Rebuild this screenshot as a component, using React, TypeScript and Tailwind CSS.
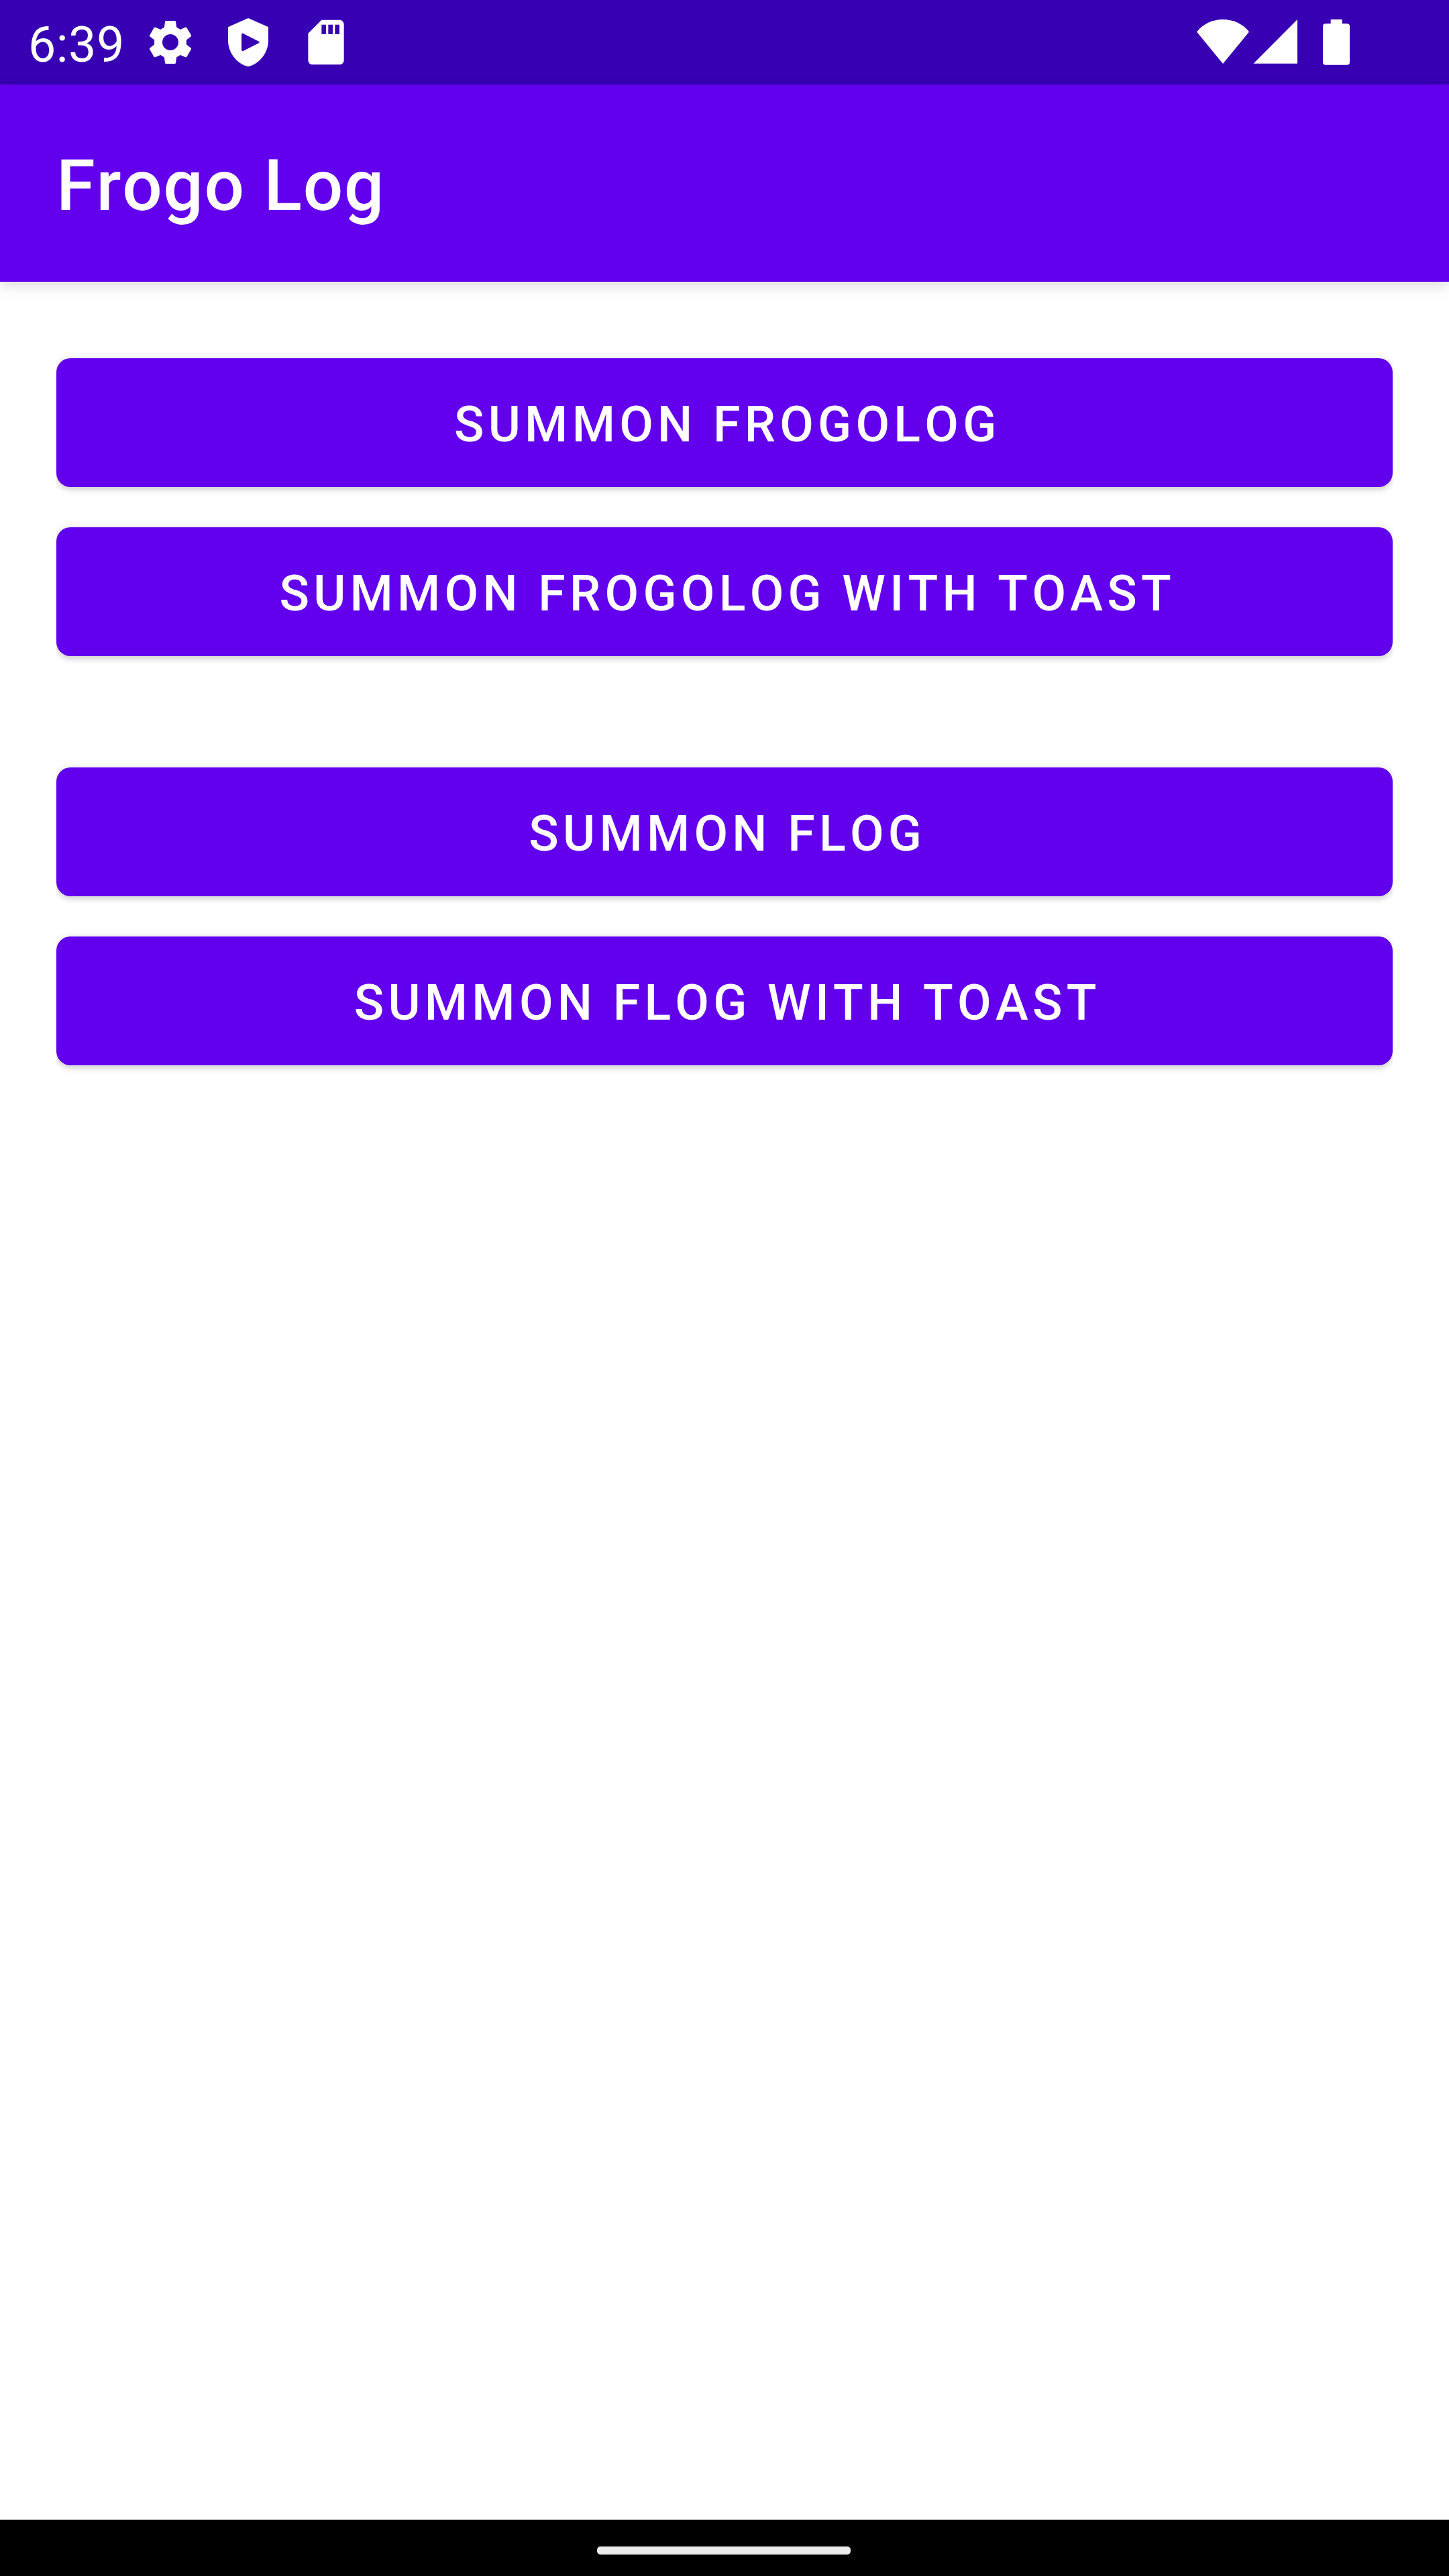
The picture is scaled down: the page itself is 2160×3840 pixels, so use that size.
import React from "react";

function StatusBar() {
  return (
    <div className="flex h-[126px] shrink-0 items-center justify-between bg-[#3700b3] pr-[148px] pl-[42px] text-white">
      <div className="flex items-center">
        <span className="w-[172px] pt-[8px] text-[73.5px] leading-[90px] tracking-[0.5px] whitespace-nowrap">6:39</span>
        <svg className="size-[80px]" viewBox="0 0 24 24" fill="currentColor">
          <path d="M19.14 12.94c.04-.3.06-.61.06-.94 0-.32-.02-.64-.07-.94l2.03-1.58c.18-.14.23-.41.12-.61l-1.92-3.32c-.12-.22-.37-.29-.59-.22l-2.39.96c-.5-.38-1.03-.7-1.62-.94l-.36-2.54c-.04-.24-.24-.41-.48-.41h-3.84c-.24 0-.43.17-.47.41l-.36 2.54c-.59.24-1.13.57-1.62.94l-2.39-.96c-.22-.08-.47 0-.59.22L2.74 8.87c-.12.21-.08.47.12.61l2.03 1.58c-.05.3-.09.63-.09.94s.02.64.07.94l-2.03 1.58c-.18.14-.23.41-.12.61l1.92 3.32c.12.22.37.29.59.22l2.39-.96c.5.38 1.03.7 1.62.94l.36 2.54c.05.24.24.41.48.41h3.84c.24 0 .44-.17.47-.41l.36-2.54c.59-.24 1.13-.56 1.62-.94l2.39.96c.22.08.47 0 .59-.22l1.92-3.32c.12-.22.07-.47-.12-.61l-2.01-1.58zM12 15.6c-1.98 0-3.6-1.62-3.6-3.6s1.62-3.6 3.6-3.6 3.6 1.62 3.6 3.6-1.62 3.6-3.6 3.6z" />
        </svg>
        <svg className="ml-[36px] size-[80px]" viewBox="0 0 24 24" fill="currentColor" fillRule="evenodd">
          <path d="M12 1.200L3 5.200v6c0 5.450 3.840 10.500 9 11.700 5.160-1.200 9-6.250 9-11.700v-6zM9 8.600c0-.5.5-.7.9-.4l6.800 3.400c.4.200.4.600 0 .8l-6.800 3.400c-.4.300-.9.100-.9-.4z" />
        </svg>
        <svg className="ml-[36px] size-[80px]" viewBox="0 0 24 24" fill="currentColor">
          <path d="M18 2h-8L4.020 8 4 20c0 1.100.9 2 2 2h12c1.100 0 2-.9 2-2V4c0-1.100-.9-2-2-2zm-6 6.400h-2v-4.300h2zm3 0h-2v-4.300h2zm3 0h-2v-4.300h2z" />
        </svg>
      </div>
      <div className="flex items-start">
        <svg className="h-[68px] w-[78px]" viewBox="0 0 78 68" fill="currentColor">
          <path d="M39 66L0 18.500C10 6 24 0 39 0s29 6 39 18.500z" />
        </svg>
        <svg className="ml-[6px] h-[68px] w-[66px]" viewBox="0 0 66 68" fill="currentColor">
          <path d="M66 0v65.700H.5z" />
        </svg>
        <svg className="ml-[38px] h-[68px] w-[40px]" viewBox="0 0 40 68" fill="currentColor">
          <path d="M11.700 0h17v6.300H36a4 4 0 0 1 4 4v53.400a4 4 0 0 1-4 4H4a4 4 0 0 1-4-4V10.300a4 4 0 0 1 4-4h7.700z" />
        </svg>
      </div>
    </div>
  );
}

function SummonButton({ label }: { label: string }) {
  return (
    <button className="flex h-[192px] w-full items-center justify-center rounded-[21px] bg-[#6200ee] pt-[6px] pl-[8.5px] text-[73.5px] font-medium tracking-[6.25px] [font-kerning:none] whitespace-nowrap text-white shadow-[0_4px_10px_rgba(0,0,0,0.15),0_0_14px_rgba(0,0,0,0.09)] [clip-path:inset(-30px_0)]">
      {label}
    </button>
  );
}

export default function App() {
  return (
    <div className="flex h-[3840px] w-[2160px] flex-col overflow-hidden bg-white font-['Roboto',sans-serif]">
      <StatusBar />
      <header className="flex h-[294px] shrink-0 items-center bg-[#6200ee] pt-[10px] pl-[84px] shadow-[0_5px_20px_rgba(0,0,0,0.15)]">
        <h1 className="text-[105px] font-medium tracking-[1.6px] [font-kerning:none] text-white">Frogo Log</h1>
      </header>
      <main className="flex flex-1 flex-col gap-[166px] px-[84px] pt-[114px]">
        <section className="flex flex-col gap-[60px]">
          <SummonButton label="SUMMON FROGOLOG" />
          <SummonButton label="SUMMON FROGOLOG WITH TOAST" />
        </section>
        <section className="flex flex-col gap-[60px]">
          <SummonButton label="SUMMON FLOG" />
          <SummonButton label="SUMMON FLOG WITH TOAST" />
        </section>
      </main>
      <nav className="flex h-[84px] shrink-0 justify-center bg-black pt-[40px]">
        <div className="mr-[2px] h-[12px] w-[378px] rounded-[5px] bg-[#ebebeb]" />
      </nav>
    </div>
  );
}
